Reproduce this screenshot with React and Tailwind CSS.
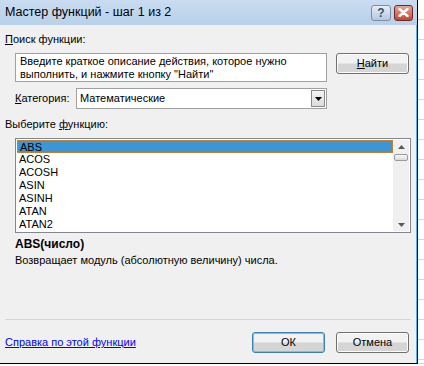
import React, { useState } from "react";

const functions = ["ABS", "ACOS", "ACOSH", "ASIN", "ASINH", "ATAN", "ATAN2"];

function WinButton({ children, focused }) {
  return (
    <button
      className={
        "h-[21px] w-[73px] rounded-[3px] border bg-gradient-to-b from-[#f2f2f2] from-45% to-[#d5d5d5] to-55% text-[11px] text-black " +
        (focused
          ? "border-[#3c7fb1] shadow-[inset_0_0_0_1px_#48d8fb]"
          : "border-[#707070] shadow-[inset_0_0_0_1px_#fcfcfc]")
      }
    >
      {children}
    </button>
  );
}

export default function App() {
  const [selected, setSelected] = useState("ABS");

  return (
    <div
      className="flex h-[366px] w-[424px] overflow-hidden bg-white bg-[repeating-linear-gradient(to_bottom,transparent_0,transparent_19px,#d0d7e5_19px,#d0d7e5_20px)]"
      style={{ fontFamily: '"Liberation Sans", Arial, sans-serif' }}
    >
      <div className="flex h-[364px] w-[418px] shrink-0 flex-col border-r border-b border-black bg-[#f0f0f0] shadow-[inset_-1px_0_0_#3fc0ef]">
        {/* Title bar */}
        <div className="flex h-[25px] items-center bg-gradient-to-b from-[#c9dcf0] to-[#b8d0ea] pl-[5px] pr-[4px]">
          <span className="flex-1 text-[12.5px] text-black">Мастер функций - шаг 1 из 2</span>
          <div className="flex gap-[3px]">
            <div className="flex h-[16px] w-[20px] items-center justify-center rounded-[3px] border border-[#7a8ea6] bg-gradient-to-b from-[#e4edf7] to-[#b6c9df] text-[12px] font-bold leading-none text-[#3d4f66]">
              ?
            </div>
            <div className="flex h-[16px] w-[19px] items-center justify-center rounded-[3px] border border-[#6b2a2a] bg-gradient-to-b from-[#e2a597] to-[#c4452f]">
              <svg width="11" height="9" viewBox="0 0 11 9">
                <path d="M1.5 1 L9.5 8 M9.5 1 L1.5 8" stroke="#fff" strokeWidth="2.4" strokeLinecap="round" />
              </svg>
            </div>
          </div>
        </div>

        {/* Body */}
        <div className="flex flex-1 flex-col px-[5px] text-[11px] text-black">
          <div className="mt-[8px] leading-[13px]">
            <span className="underline">П</span>оиск функции:
          </div>

          <div className="mt-[7px] flex items-start gap-[9px] pl-[10px]">
            <div className="h-[29px] w-[312px] border border-[#a0a0a0] bg-white px-[4px] pt-[1px] leading-[13px]">
              Введите краткое описание действия, которое нужно выполнить, и нажмите кнопку "Найти"
            </div>
            <WinButton>
              <span className="underline">Н</span>айти
            </WinButton>
          </div>

          <div className="mt-[6px] flex items-center pl-[10px]">
            <span className="w-[61px]">
              <span className="underline">К</span>атегория:
            </span>
            <div className="flex h-[21px] w-[251px] items-center border border-[#a0a0a0] bg-white pl-[3px] pr-[1px]">
              <span className="flex-1">Математические</span>
              <div className="flex h-[17px] w-[14px] items-center justify-center border border-[#8a8a8a] bg-gradient-to-b from-[#f4f4f4] to-[#dcdcdc]">
                <svg width="7" height="4" viewBox="0 0 7 4">
                  <path d="M0 0 H7 L3.5 4 Z" fill="#000" />
                </svg>
              </div>
            </div>
          </div>

          <div className="mt-[9px] leading-[13px]">
            Выберите <span className="underline">ф</span>ункцию:
          </div>

          <div className="ml-[10px] mt-[7px] flex h-[95px] w-[396px] border border-[#828790] bg-white p-[1px]">
            <div className="flex flex-1 flex-col">
              {functions.map((f) => (
                <div
                  key={f}
                  onClick={() => setSelected(f)}
                  className={
                    "h-[13px] pl-[2px] leading-[13px] " +
                    (selected === f
                      ? "border border-dotted border-[#c88a3a] bg-[#3d95d6] pl-[1px] leading-[11px] text-black"
                      : "")
                  }
                >
                  {f}
                </div>
              ))}
            </div>
            <div className="flex w-[16px] flex-col items-center bg-[#f0f0f0] pt-[5px] pb-[4px]">
              <svg width="7" height="4" viewBox="0 0 7 4">
                <path d="M3.5 0 L7 4 H0 Z" fill="#5a5a5a" />
              </svg>
              <div className="mt-[5px] h-[7px] w-[14px] rounded-[2px] border border-[#9a9a9a] bg-gradient-to-b from-[#f8f8f8] to-[#dadada]" />
              <div className="flex-1" />
              <svg width="7" height="4" viewBox="0 0 7 4">
                <path d="M0 0 H7 L3.5 4 Z" fill="#5a5a5a" />
              </svg>
            </div>
          </div>

          <div className="mt-[5px] pl-[10px] text-[12px] font-bold leading-[13px]">ABS(число)</div>
          <div className="mt-[3px] pl-[10px] leading-[13px]">
            Возвращает модуль (абсолютную величину) числа.
          </div>

          <div className="flex-1" />
          <div className="h-px w-[406px] bg-[#d5d5d5]" />

          <div className="mb-[10px] mt-[12px] flex items-center">
            <a href="#" className="flex-1 text-[#0000ff] underline">
              Справка по этой функции
            </a>
            <div className="flex gap-[11px] pr-[3px]">
              <WinButton focused>ОК</WinButton>
              <WinButton>Отмена</WinButton>
            </div>
          </div>
        </div>
      </div>
      <div className="h-[364px] w-[6px] border-b border-[#d0d7e5]" />
    </div>
  );
}
